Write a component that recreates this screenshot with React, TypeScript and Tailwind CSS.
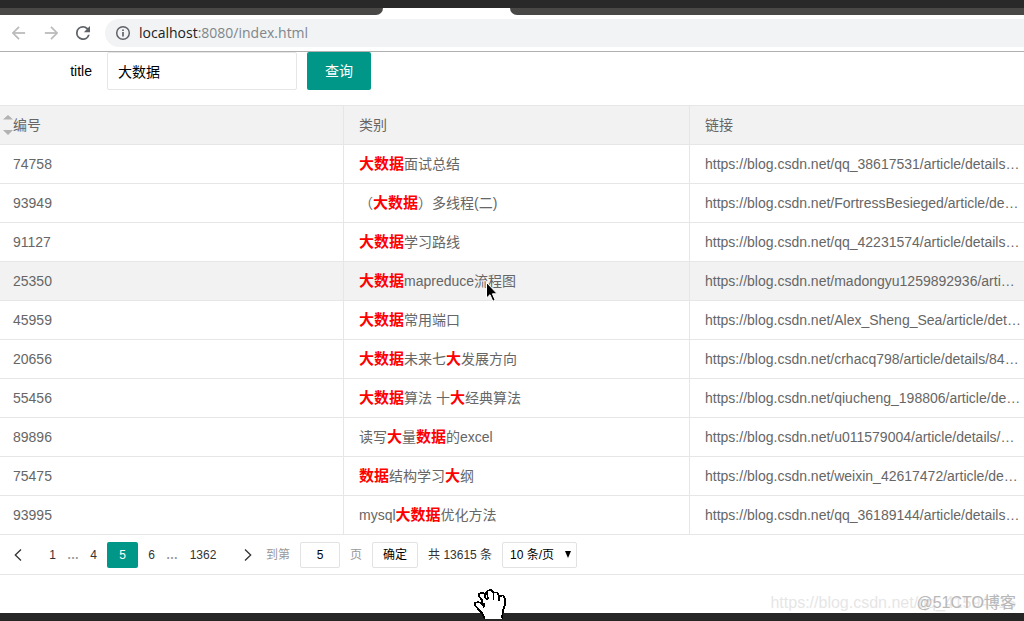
import { ArrowLeft, ArrowRight } from 'lucide-react';

const keyword = /(大数据|数据|大)/;

const rows = [
  { id: 74758, title: '大数据面试总结', url: 'https://blog.csdn.net/qq_38617531/article/details…' },
  { id: 93949, title: '（大数据）多线程(二)', url: 'https://blog.csdn.net/FortressBesieged/article/de…' },
  { id: 91127, title: '大数据学习路线', url: 'https://blog.csdn.net/qq_42231574/article/details…' },
  { id: 25350, title: '大数据mapreduce流程图', url: 'https://blog.csdn.net/madongyu1259892936/arti…' },
  { id: 45959, title: '大数据常用端口', url: 'https://blog.csdn.net/Alex_Sheng_Sea/article/det…' },
  { id: 20656, title: '大数据未来七大发展方向', url: 'https://blog.csdn.net/crhacq798/article/details/84…' },
  { id: 55456, title: '大数据算法 十大经典算法', url: 'https://blog.csdn.net/qiucheng_198806/article/de…' },
  { id: 89896, title: '读写大量数据的excel', url: 'https://blog.csdn.net/u011579004/article/details/…' },
  { id: 75475, title: '数据结构学习大纲', url: 'https://blog.csdn.net/weixin_42617472/article/de…' },
  { id: 93995, title: 'mysql大数据优化方法', url: 'https://blog.csdn.net/qq_36189144/article/details…' },
];

function Highlight({ text }: { text: string }) {
  return (
    <>
      {text.split(keyword).map((part, i) =>
        keyword.test(part) ? (
          <em key={i} className="text-[15px] font-bold not-italic text-[#ff0000]">
            {part}
          </em>
        ) : (
          part
        )
      )}
    </>
  );
}

function BrowserBar() {
  return (
    <header>
      <div className="h-2 bg-[#292929]" />
      <div className="flex h-[7px]">
        <div className="w-[383px] rounded-br-lg bg-[#4a4846]" />
        <div className="w-[127px]" />
        <div className="flex-1 rounded-bl-lg bg-[#4a4846]" />
      </div>
      <div className="flex h-[37px] items-center border-b border-[#b0b0b0] pl-3">
        <button type="button" aria-label="Back" className="mr-[18px] text-[#bababa]">
          <ArrowLeft className="size-3.5" viewBox="4 4 16 16" strokeWidth={2} strokeLinecap="butt" strokeLinejoin="miter" />
        </button>
        <button type="button" aria-label="Forward" className="mr-[18px] text-[#bababa]">
          <ArrowRight className="size-3.5" viewBox="4 4 16 16" strokeWidth={2} strokeLinecap="butt" strokeLinejoin="miter" />
        </button>
        <button type="button" aria-label="Reload" className="mr-[15px]">
          <svg className="size-3.5" viewBox="4 4 16 16" fill="#5f6368">
            <path d="M17.65 6.35A7.96 7.96 0 0 0 12 4a8 8 0 1 0 7.73 10h-2.08A6 6 0 1 1 12 6c1.66 0 3.14.69 4.22 1.78L13 11h7V4z" />
          </svg>
        </button>
        <div className="flex h-7 flex-1 items-center rounded-l-full bg-[#f1f3f4] pl-2.5">
          <svg className="mr-2 size-4" viewBox="0 0 16 16" fill="none" stroke="#5f6368">
            <circle cx="8" cy="8" r="6.3" strokeWidth="1.5" />
            <path d="M8 7v4.5M8 4.5v1.6" strokeWidth="1.7" />
          </svg>
          <span className="font-['Open_Sans','Noto_Sans',sans-serif] text-sm text-[#80868b]">
            <span className="text-[#202124]">localhost</span>:8080/index.html
          </span>
        </div>
      </div>
    </header>
  );
}

function SearchForm() {
  return (
    <form className="flex h-[53px] items-start text-sm" onSubmit={(e) => e.preventDefault()}>
      <label htmlFor="title" className="w-[107px] pr-[15px] text-right leading-[38px] text-black">
        title
      </label>
      <input
        id="title"
        type="text"
        defaultValue="大数据"
        className="h-[38px] w-[190px] rounded-xs border border-[#e6e6e6] px-2.5 text-black outline-none"
      />
      <button type="submit" className="ml-2.5 h-[38px] rounded-xs bg-[#009688] px-[18px] text-white">
        查询
      </button>
    </form>
  );
}

function DataTable() {
  const cell = 'h-[39px] truncate border-b border-r border-[#e6e6e6] pl-[15px] pr-2 text-left font-normal';
  return (
    <div className="overflow-hidden">
      <table className="-ml-0.5 w-[calc(100%+14px)] table-fixed border-separate border-spacing-0 border-t border-[#e6e6e6] text-sm text-[#666]">
        <thead className="bg-[#f2f2f2]">
          <tr>
            <th className={cell}>
              <div className="relative -ml-2.5 pl-2.5">
                编号
                <svg className="absolute left-0 top-0 h-5 w-2.5" viewBox="0 0 10 20" fill="#b2b2b2">
                  <path d="M0 4.500 5 0l5 4.500zM0 15l5 5 5-5z" />
                </svg>
              </div>
            </th>
            <th className={cell}>类别</th>
            <th className={cell}>链接</th>
          </tr>
        </thead>
        <tbody>
          {rows.map((row) => (
            <tr key={row.id} className={row.id === 25350 ? 'bg-[#f2f2f2]' : 'bg-white'}>
              <td className={cell}>{row.id}</td>
              <td className={cell}>
                <Highlight text={row.title} />
              </td>
              <td className={cell}>{row.url}</td>
            </tr>
          ))}
        </tbody>
      </table>
    </div>
  );
}

function Pager() {
  const page = 'h-[26px] w-[27px] text-center text-[#333]';
  const dots = 'w-3.5 text-center font-bold text-[#999]';
  return (
    <nav className="flex h-10 items-center border-b border-[#e6e6e6] text-xs text-[#333]">
      <button type="button" aria-label="Previous page" className="mr-[3px] flex w-9 justify-center">
        <svg className="h-3 w-2" viewBox="0 0 8 12" fill="none" stroke="#333" strokeWidth="1.3">
          <path d="M7 .5 1.300 6 7 11.500" />
        </svg>
      </button>
      <button type="button" className={page}>1</button>
      <span className={dots}>…</span>
      <button type="button" className={page}>4</button>
      <button type="button" aria-current="page" className="h-[26px] w-[31px] rounded-xs bg-[#009688] text-white">5</button>
      <button type="button" className={page}>6</button>
      <span className={dots}>…</span>
      <button type="button" className="h-[26px] w-12 text-center">1362</button>
      <button type="button" aria-label="Next page" className="ml-[3px] flex w-9 justify-center">
        <svg className="h-3 w-2" viewBox="0 0 8 12" fill="none" stroke="#333" strokeWidth="1.3">
          <path d="M1 .5 6.700 6 1 11.500" />
        </svg>
      </button>
      <div className="flex items-center gap-2.5">
        <label htmlFor="jump" className="text-[#999]">到第</label>
        <input
          id="jump"
          type="text"
          defaultValue="5"
          className="h-[26px] w-10 rounded-xs border border-[#e2e2e2] text-center text-black outline-none"
        />
        <span className="text-[#999]">页</span>
        <button type="button" className="h-[26px] rounded-xs border border-[#e2e2e2] px-2.5 text-black">确定</button>
        <span>共 13615 条</span>
        <div className="relative">
          <select
            aria-label="Page size"
            className="block h-[26px] w-[75px] appearance-none rounded-xs border border-[#e2e2e2] bg-white pl-[7px] text-black outline-none"
          >
            <option>10 条/页</option>
          </select>
          <svg className="pointer-events-none absolute right-1.5 top-[9px] h-[7px] w-1.5" viewBox="0 0 6 7">
            <path d="M0 0h6L3 7z" />
          </svg>
        </div>
      </div>
    </nav>
  );
}

function Pointer() {
  return (
    <svg className="pointer-events-none absolute left-[486px] top-[282px] h-5 w-3" viewBox="0 0 12 20">
      <path d="M.5.500v15.500l3.500-3.300 2.800 6.500 2.400-1-2.800-6.400h4.800z" stroke="#fff" strokeWidth="1" />
    </svg>
  );
}

function Hand() {
  return (
    <svg className="pointer-events-none absolute left-[474px] top-[588px] h-8 w-8" viewBox="0 0 32 32" shapeRendering="crispEdges">
      <path
        d="M11 30.500 8 25 5 22 1 17.500V15l3-1 3 1 1.500 2L8 12 5 8.500V6l3-1.500 3 1.500 1.500-2L14 2.500l3-.5 2.500 2.500L23 4.500l2 3.500 4-.5 2 3v6.500l-2 5-1 8.500"
        fill="#fff"
        stroke="#000"
        strokeWidth="1.700"
      />
      <path d="M11 6v3l2 3M13 4l1 7M19.500 4v8M25 7v6M7 15l3 1v3" fill="none" stroke="#000" strokeWidth="1.700" />
    </svg>
  );
}

export default function App() {
  return (
    <div
      lang="zh-CN"
      className="relative flex min-h-screen flex-col overflow-hidden bg-white font-['Liberation_Sans','Noto_Sans_CJK_SC',sans-serif]"
    >
      <BrowserBar />
      <main className="flex-1">
        <SearchForm />
        <DataTable />
        <Pager />
      </main>
      <footer className="h-2 bg-[#262626]" />
      <Pointer />
      <Hand />
      <div className="pointer-events-none absolute bottom-2 right-2 text-base leading-5 text-[#e6e6e6]">
        https://blog.csdn.net/qq_41594415
        <span className="absolute right-0 top-0 text-[#b8b8b8]">@51CTO博客</span>
      </div>
    </div>
  );
}
